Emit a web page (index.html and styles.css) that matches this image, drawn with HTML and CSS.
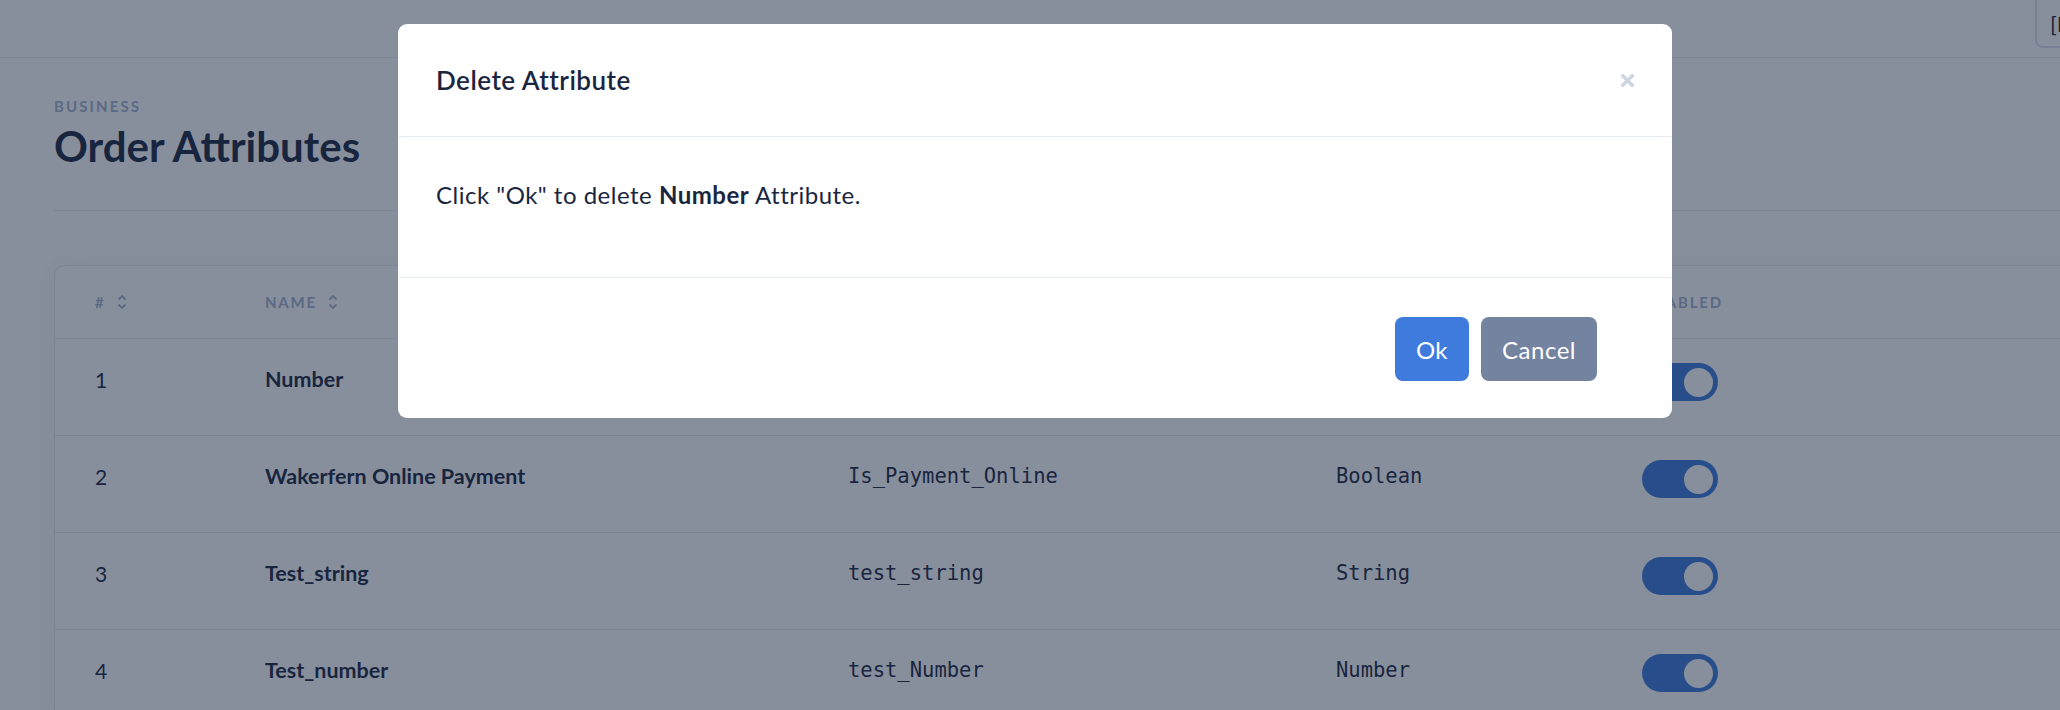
FILE: index.html
```html
<!DOCTYPE html>
<html lang="en">
<head>
  <meta charset="UTF-8">
  <meta name="viewport" content="width=device-width, initial-scale=1.0">
  <title>Order Attributes</title>
  <link rel="stylesheet" href="styles.css">
</head>
<body>

  <header class="topbar">
    <button class="lang-btn">[EN]</button>
  </header>

  <main class="page">
    <div class="page-head">
      <div class="eyebrow">Business</div>
      <h1>Order Attributes</h1>
    </div>

    <div class="card">
      <div class="row head">
        <div class="th"># <svg class="sort" viewBox="0 0 10 16"><path d="M1.5 5.5 5 2 8.5 5.5M1.5 10.5 5 14 8.5 10.5"/></svg></div>
        <div class="th">Name <svg class="sort" viewBox="0 0 10 16"><path d="M1.5 5.5 5 2 8.5 5.5M1.5 10.5 5 14 8.5 10.5"/></svg></div>
        <div class="th">Key <svg class="sort" viewBox="0 0 10 16"><path d="M1.5 5.5 5 2 8.5 5.5M1.5 10.5 5 14 8.5 10.5"/></svg></div>
        <div class="th">Type <svg class="sort" viewBox="0 0 10 16"><path d="M1.5 5.5 5 2 8.5 5.5M1.5 10.5 5 14 8.5 10.5"/></svg></div>
        <div class="th">Enabled</div>
      </div>

      <div class="row">
        <div class="td">1</div>
        <div class="td name">Number</div>
        <div class="td code">number</div>
        <div class="td code">Number</div>
        <div class="td"><span class="toggle on"></span></div>
      </div>
      <div class="row">
        <div class="td">2</div>
        <div class="td name">Wakerfern Online Payment</div>
        <div class="td code">Is_Payment_Online</div>
        <div class="td code">Boolean</div>
        <div class="td"><span class="toggle on"></span></div>
      </div>
      <div class="row">
        <div class="td">3</div>
        <div class="td name">Test_string</div>
        <div class="td code">test_string</div>
        <div class="td code">String</div>
        <div class="td"><span class="toggle on"></span></div>
      </div>
      <div class="row">
        <div class="td">4</div>
        <div class="td name">Test_number</div>
        <div class="td code">test_Number</div>
        <div class="td code">Number</div>
        <div class="td"><span class="toggle on"></span></div>
      </div>
    </div>
  </main>

  <div class="backdrop"></div>

  <div class="modal-wrap">
    <div class="modal">
      <div class="modal-header">
        <h5>Delete Attribute</h5>
        <button class="close-btn"><svg viewBox="0 0 16 16"><path d="M2.5 2.5 13.5 13.5M13.5 2.5 2.5 13.5"/></svg></button>
      </div>
      <div class="modal-body">
        Click "Ok" to delete <b>Number</b> Attribute.
      </div>
      <div class="modal-footer">
        <button class="btn ok-btn">Ok</button>
        <button class="btn cancel-btn">Cancel</button>
      </div>
    </div>
  </div>

</body>
</html>
```

FILE: styles.css
```css
body {
  margin: 0;
  font-family: Lato, 'Open Sans', sans-serif;
  background: white;
  color: #1e2a45;
  overflow: hidden;
}
.topbar {
  height: 57px;
  border-bottom: 1px solid #e2e8f0;
  display: flex;
  justify-content: flex-end;
  overflow: hidden;
}
.lang-btn {
  margin: -10px -60px 0 0;
  width: 85px;
  height: 58px;
  padding: 8px 13px 0;
  text-align: left;
  background: white;
  border: 2px solid #dde3ee;
  border-radius: 8px;
  font-family: inherit;
  font-size: 22px;
  color: #1e2a45;
}
.page {
  padding-left: 54px;
  margin-right: -80px;
}
.page-head {
  padding-top: 38px;
  padding-bottom: 40px;
  border-bottom: 1px solid #e2e8f0;
}
.eyebrow {
  font-size: 15px;
  line-height: 20px;
  font-weight: 700;
  letter-spacing: 0.14em;
  text-transform: uppercase;
  color: #a3b3cf;
}
h1 {
  margin: 6px 0 0;
  font-size: 42px;
  line-height: 48px;
  font-weight: 700;
}
.card {
  margin-top: 54px;
  border: 1px solid #e2e8f0;
  border-radius: 10px;
  box-shadow: 0 0 30px rgba(0, 0, 0, 0.05);
}
.row {
  display: grid;
  grid-template-columns: 170px 583px 488px 306px 1fr;
  align-items: center;
  height: 97px;
  box-sizing: border-box;
  padding: 0 0 10px 40px;
  border-bottom: 1px solid #e2e8f0;
}
.row.head {
  height: 73px;
  padding-bottom: 0;
}
.th {
  display: flex;
  align-items: center;
  gap: 11px;
  font-size: 15px;
  font-weight: 700;
  letter-spacing: 0.12em;
  text-transform: uppercase;
  color: #a3b3cf;
}
.sort {
  width: 10px;
  height: 16px;
  fill: none;
  stroke: #a3b3cf;
  stroke-width: 1.8;
}
.td {
  font-size: 21px;
  padding-bottom: 6px;
}
.name {
  font-weight: 700;
  font-size: 21.5px;
}
.code {
  font-family: 'DejaVu Sans Mono', monospace;
  font-size: 20.5px;
}
.toggle {
  display: block;
  width: 76px;
  height: 38px;
  border-radius: 19px;
  background: #3f7bdc;
  position: relative;
  margin-top: 6px;
}
.toggle::after {
  content: "";
  position: absolute;
  top: 4.5px;
  right: 5px;
  width: 29px;
  height: 29px;
  border-radius: 50%;
  background: white;
}

/* modal */
.backdrop {
  position: fixed;
  inset: 0;
  background: rgba(17, 32, 58, 0.5);
}
.modal-wrap {
  position: fixed;
  inset: 0;
  display: flex;
  justify-content: center;
  align-items: flex-start;
  padding: 24px 0 0 10px;
}
.modal {
  width: 1274px;
  background: white;
  border-radius: 9px;
  color: #1a2640;
}
.modal-header {
  height: 112px;
  display: flex;
  align-items: center;
  justify-content: space-between;
  padding: 0 36px 0 38px;
  border-bottom: 1px solid #e6ebf5;
}
.modal-header h5 {
  margin: 0;
  font-size: 26px;
  font-weight: 600;
  letter-spacing: 0.5px;
}
.close-btn {
  background: none;
  border: none;
  padding: 0;
  width: 17px;
  height: 17px;
  cursor: pointer;
}
.close-btn svg {
  width: 17px;
  height: 17px;
  fill: none;
  stroke: #cdd5e3;
  stroke-width: 3.4;
}
.modal-body {
  padding: 42px 38px 66px;
  font-size: 24px;
  line-height: 32px;
  letter-spacing: 0.5px;
  border-bottom: 1px solid #e6ebf5;
}
.modal-footer {
  display: flex;
  justify-content: flex-end;
  gap: 12px;
  padding: 39px 75px 37px;
}
.btn {
  height: 64px;
  padding: 0 21px;
  border: none;
  border-radius: 8px;
  font-family: inherit;
  font-size: 24px;
  letter-spacing: 0.5px;
  color: white;
  cursor: pointer;
}
.ok-btn {
  background-color: #3f7bdc;
}
.cancel-btn {
  background-color: #7383a0;
}
```
